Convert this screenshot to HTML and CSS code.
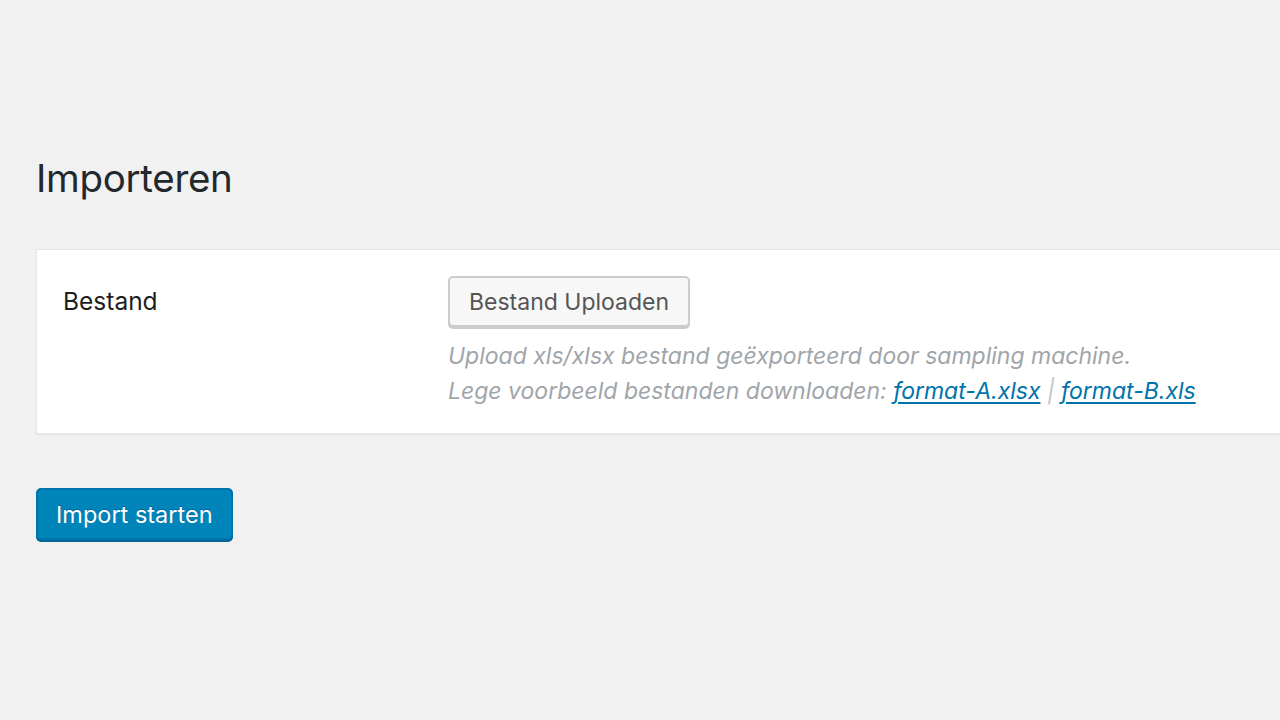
FILE: index.html
```html
<!DOCTYPE html>
<html lang="nl">
<head>
<meta charset="utf-8">
<title>Importeren</title>
<link rel="stylesheet" href="styles.css">
</head>
<body>
<div class="wrap">
  <h1 class="title">Importeren</h1>
  <div class="card">
    <div class="row">
      <div class="label">Bestand</div>
      <div class="field">
        <button class="btn-secondary" type="button">Bestand Uploaden</button>
        <p class="desc">Upload xls/xlsx bestand geëxporteerd door sampling machine.<br>Lege voorbeeld bestanden downloaden: <a href="#">format-A.xlsx</a> <span class="sep">|</span> <a href="#">format-B.xls</a></p>
      </div>
    </div>
  </div>
  <button class="btn-primary" type="button">Import starten</button>
</div>
</body>
</html>
```
FILE: styles.css
```css
html, body {
  margin: 0;
  padding: 0;
  background: #f1f1f1;
  font-family: Inter, "Noto Sans", "Liberation Sans", sans-serif;
  color: #23282d;
}
.wrap {
  padding: 152px 0 0 36px;
  overflow: hidden;
  height: 568px;
}
.title {
  margin: 0;
  font-size: 38.5px;
  font-weight: 400;
  line-height: 52px;
  color: #23282d;
  letter-spacing: -0.3px;
}
.card {
  margin-top: 45px;
  width: 1300px;
  background: #fff;
  border: 1px solid #e5e5e5;
  box-shadow: 0 1px 2px rgba(0,0,0,0.05);
}
.row {
  display: flex;
  padding: 26px 0 24px 26px;
}
.label {
  width: 385px;
  font-size: 24.5px;
  color: #1e1e1e;
  padding-top: 9px;
  line-height: 32px;
}
.field {
  display: flex;
  flex-direction: column;
  align-items: flex-start;
}
.btn-secondary {
  font-family: inherit;
  height: 51px;
  padding: 0 19px;
  font-size: 23px;
  color: #555;
  background: #f7f7f7;
  border: 2px solid #ccc;
  border-radius: 5px;
  box-shadow: 0 2px 0 #ccc;
  cursor: pointer;
}
.desc {
  margin: 12px 0 0;
  font-size: 23px;
  font-style: italic;
  line-height: 35px;
  color: #a0a5aa;
}
.desc .sep {
  color: #c3c4c7;
}
.desc a {
  color: #0073aa;
  text-decoration: underline;
  text-underline-offset: 3px;
  text-decoration-thickness: 2px;
}
.btn-primary {
  margin-top: 54px;
  font-family: inherit;
  height: 52px;
  padding: 0 18px;
  font-size: 23.5px;
  color: #fff;
  background: #0085ba;
  border: 2px solid #0073aa;
  border-radius: 5px;
  box-shadow: 0 2px 0 #006799;
  text-shadow: 0 -1px 1px #006799;
  cursor: pointer;
}
```
